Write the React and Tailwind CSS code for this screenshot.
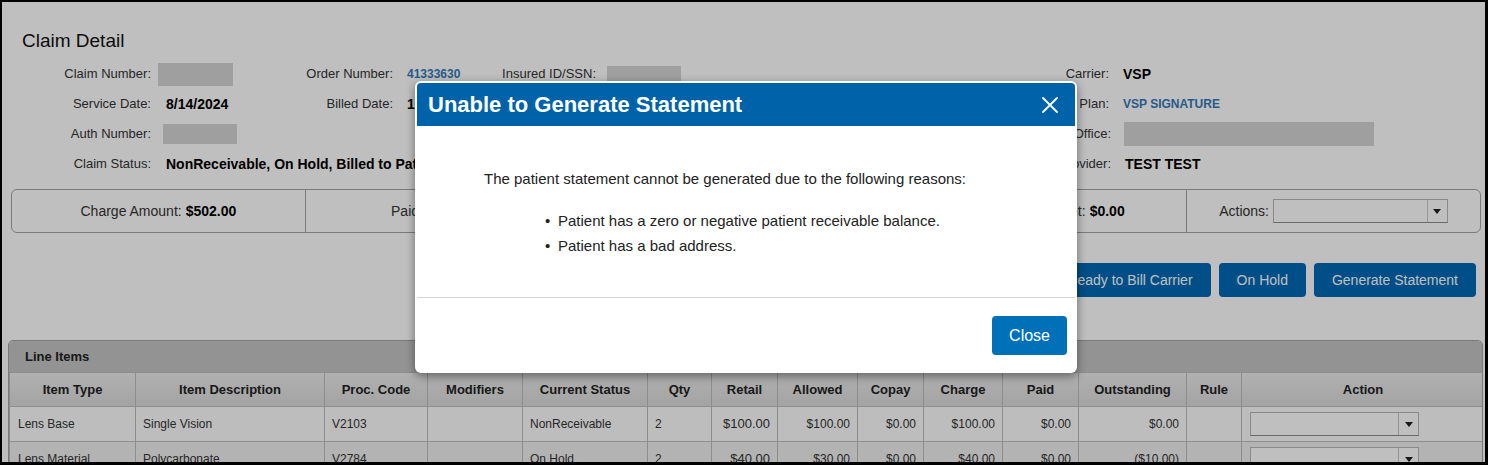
import React from 'react';

const columns = [
  { name: 'Item Type', w: 'w-[126px]' },
  { name: 'Item Description', w: 'w-[189px]' },
  { name: 'Proc. Code', w: 'w-[103px]' },
  { name: 'Modifiers', w: 'w-[95px]' },
  { name: 'Current Status', w: 'w-[125px]' },
  { name: 'Qty', w: 'w-[64px]' },
  { name: 'Retail', w: 'w-[66px]' },
  { name: 'Allowed', w: 'w-[80px]' },
  { name: 'Copay', w: 'w-[66px]' },
  { name: 'Charge', w: 'w-[79px]' },
  { name: 'Paid', w: 'w-[76px]' },
  { name: 'Outstanding', w: 'w-[108px]' },
  { name: 'Rule', w: 'w-[55px]' },
  { name: 'Action', w: 'w-[243px]' },
];

const lineItems = [
  {
    type: 'Lens Base',
    desc: 'Single Vision',
    code: 'V2103',
    mods: '',
    status: 'NonReceivable',
    qty: '2',
    retail: '$100.00',
    allowed: '$100.00',
    copay: '$0.00',
    charge: '$100.00',
    paid: '$0.00',
    outstanding: '$0.00',
  },
  {
    type: 'Lens Material',
    desc: 'Polycarbonate',
    code: 'V2784',
    mods: '',
    status: 'On Hold',
    qty: '2',
    retail: '$40.00',
    allowed: '$30.00',
    copay: '$0.00',
    charge: '$40.00',
    paid: '$0.00',
    outstanding: '($10.00)',
  },
];

function Label({ className, children }) {
  return <div className={`shrink-0 text-right text-[13px] text-[#333] ${className}`}>{children}</div>;
}

function Redacted({ className }) {
  return <div className={`bg-[#d5d5d5] ${className}`} />;
}

function SummaryCell({ label, value, first }) {
  return (
    <div className={`flex flex-1 items-center justify-center text-[14px] text-[#333] ${first ? '' : 'border-l border-[#a4a4a4]'}`}>
      {label}: <span className="ml-1 font-bold text-black">{value}</span>
    </div>
  );
}

function Combo({ className }) {
  return (
    <div className={`flex h-[24px] items-stretch border border-[#b8b8b8] border-b-[#8c8c8c] bg-white ${className}`}>
      <div className="flex-1" />
      <div className="flex w-[20px] items-center justify-center border-l border-[#c8c8c8]">
        <svg width="8" height="5" viewBox="0 0 8 5">
          <path d="M0 0 H8 L4 5 Z" fill="#222" />
        </svg>
      </div>
    </div>
  );
}

function Td({ children, right, className = '' }) {
  return (
    <td className={`border border-[#bdbdbd] px-[7px] text-[12px] text-[#333] ${right ? 'text-right' : 'text-left'} ${className}`}>
      {children}
    </td>
  );
}

export default function App() {
  return (
    <div className="relative h-[465px] w-[1488px] overflow-hidden border-t-2 border-l-2 border-r-[3px] border-b-[3px] border-black bg-white font-['Liberation_Sans',Arial,sans-serif] text-[#222]">
      <div className="pt-[27px]">
        <h1 className="pl-[20px] text-[19px] leading-[24px] text-[#111]">Claim Detail</h1>

        <div className="mt-[6px] pl-[20px]">
          <div className="flex h-[30px] items-center">
            <Label className="w-[129px]">Claim Number:</Label>
            <div className="w-[132px] shrink-0 pl-[7px]">
              <Redacted className="h-[23px] w-[75px]" />
            </div>
            <Label className="w-[110px]">Order Number:</Label>
            <div className="w-[94px] shrink-0 pl-[14px] text-[12px] font-bold text-[#337ab7]">41333630</div>
            <Label className="w-[109px]">Insured ID/SSN:</Label>
            <div className="w-[393px] shrink-0 pl-[11px]">
              <Redacted className="h-[17px] w-[74px]" />
            </div>
            <Label className="w-[120px]">Carrier:</Label>
            <div className="pl-[14px] text-[14px] font-bold text-black">VSP</div>
          </div>

          <div className="flex h-[30px] items-center">
            <Label className="w-[129px]">Service Date:</Label>
            <div className="w-[132px] shrink-0 pl-[15px] text-[14px] font-bold text-black">8/14/2024</div>
            <Label className="w-[110px]">Billed Date:</Label>
            <div className="w-[94px] shrink-0 pl-[14px] text-[14px] font-bold text-black">10/01/2024</div>
            <div className="w-[502px] shrink-0" />
            <Label className="w-[120px]">Benefit Plan:</Label>
            <div className="pl-[14px] text-[12px] font-bold text-[#337ab7]">VSP SIGNATURE</div>
          </div>

          <div className="flex h-[30px] items-center">
            <Label className="w-[129px]">Auth Number:</Label>
            <div className="w-[132px] shrink-0 pl-[12px]">
              <Redacted className="h-[20px] w-[74px]" />
            </div>
            <div className="w-[708px] shrink-0" />
            <Label className="w-[120px]">Service Office:</Label>
            <div className="pl-[13px]">
              <Redacted className="h-[24px] w-[250px]" />
            </div>
          </div>

          <div className="flex h-[30px] items-center">
            <Label className="w-[129px]">Claim Status:</Label>
            <div className="w-[840px] shrink-0 whitespace-nowrap pl-[15px] text-[14px] font-bold text-black">
              NonReceivable, On Hold, Billed to Patient
            </div>
            <Label className="w-[120px]">Rendering Provider:</Label>
            <div className="pl-[14px] text-[14px] font-bold text-black">TEST TEST</div>
          </div>
        </div>

        <div className="mt-[10px] ml-[9px] mr-[4px] flex h-[44px] rounded-[6px] border border-[#a4a4a4]">
          <SummaryCell first label="Charge Amount" value="$502.00" />
          <SummaryCell label="Paid Amount" value="$0.00" />
          <SummaryCell label="Allowed Amount" value="$502.00" />
          <SummaryCell label="Outstanding Amount" value="$0.00" />
          <div className="flex flex-1 items-center justify-center gap-[4px] border-l border-[#a4a4a4] text-[14px] text-[#333]">
            Actions:
            <Combo className="w-[175px]" />
          </div>
        </div>

        <div className="mt-[30px] mr-[9px] flex justify-end gap-2">
          {['Ready to Bill Carrier', 'On Hold', 'Generate Statement'].map((label) => (
            <button
              key={label}
              className="h-[34px] rounded-[4px] bg-[#0069b4] px-[18px] text-[14px] text-white"
            >
              {label}
            </button>
          ))}
        </div>

        <div className="mt-[43px] ml-[6px] mr-[2px] overflow-hidden rounded-t-[5px] border border-[#a3a3a3]">
          <div className="flex h-[31px] items-center bg-[#c4c4c4] pl-[16px] text-[13px] font-bold text-[#222]">
            Line Items
          </div>
          <table className="w-full table-fixed border-collapse">
            <colgroup>
              {columns.map((c) => (
                <col key={c.name} className={c.w} />
              ))}
            </colgroup>
            <thead>
              <tr className="h-[34px] bg-gradient-to-b from-[#ececec] to-[#dadada]">
                {columns.map((c) => (
                  <th key={c.name} className="border border-[#bdbdbd] text-center text-[13px] font-bold text-[#222]">
                    {c.name}
                  </th>
                ))}
              </tr>
            </thead>
            <tbody>
              {lineItems.map((row, i) => (
                <tr key={row.type} className={`h-[35px] ${i % 2 ? 'bg-[#efefef]' : 'bg-[#fcfcfc]'}`}>
                  <Td className="pl-[8px]">{row.type}</Td>
                  <Td>{row.desc}</Td>
                  <Td>{row.code}</Td>
                  <Td>{row.mods}</Td>
                  <Td>{row.status}</Td>
                  <Td>{row.qty}</Td>
                  <Td right className="text-[13px]">{row.retail}</Td>
                  <Td right>{row.allowed}</Td>
                  <Td right>{row.copay}</Td>
                  <Td right>{row.charge}</Td>
                  <Td right>{row.paid}</Td>
                  <Td right>{row.outstanding}</Td>
                  <Td />
                  <td className="border border-[#bdbdbd] pl-[8px]">
                    <Combo className="w-[169px]" />
                  </td>
                </tr>
              ))}
            </tbody>
          </table>
        </div>
      </div>

      {/* dim overlay behind the dialog */}
      <div className="absolute inset-0 bg-black/25" />

      <div className="absolute left-[413px] top-[79px] w-[662px] rounded-[6px] bg-white p-[2px] shadow-[0_3px_10px_rgba(0,0,0,0.45)]">
        <div className="flex h-[43px] items-center justify-between rounded-t-[4px] bg-[#0063a9] pl-[11px] pr-[17px]">
          <h2 className="text-[22px] font-bold text-white">Unable to Generate Statement</h2>
          <svg width="16" height="16" viewBox="0 0 16 16" stroke="white" strokeWidth="1.8" strokeLinecap="round">
            <path d="M1 1 L15 15 M15 1 L1 15" />
          </svg>
        </div>
        <div className="h-[171px] pl-[67px] pt-[43px] text-[15px] text-[#222]">
          <p className="leading-[20px]">The patient statement cannot be generated due to the following reasons:</p>
          <ul className="mt-[19px] ml-[61px]">
            <li className="flex leading-[25px]">
              <span className="w-[13px]">•</span>Patient has a zero or negative patient receivable balance.
            </li>
            <li className="flex leading-[25px]">
              <span className="w-[13px]">•</span>Patient has a bad address.
            </li>
          </ul>
        </div>
        <div className="flex justify-end border-t border-[#d4d4d4] pt-[18px] pb-[16px] pr-[8px]">
          <button className="h-[39px] rounded-[4px] bg-[#0070b8] px-[17px] text-[16px] text-white">Close</button>
        </div>
      </div>
    </div>
  );
}
